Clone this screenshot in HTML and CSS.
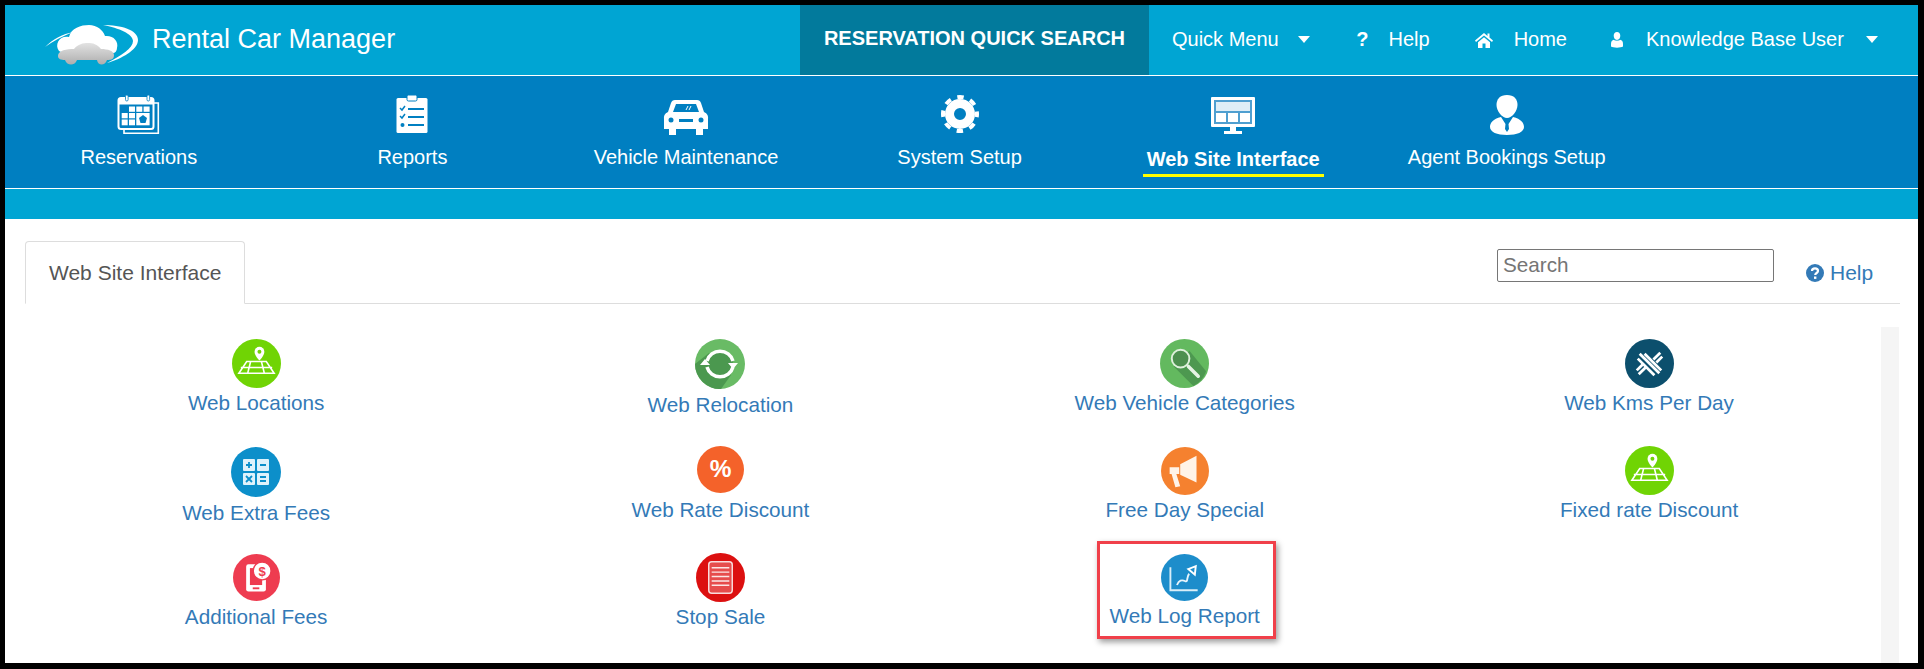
FILE: index.html
```html
<!DOCTYPE html>
<html lang="en">

<head>
	<meta charset="UTF-8">
	<title>Web Site Interface</title>
	<link rel="stylesheet" href="styles.css">
</head>

<body>
	<div class="frame">
		<header class="topbar">
			<div class="brand">
				<svg class="logo" viewBox="0 0 93 41">
					<defs>
						<linearGradient id="carFill" x1="0" y1="0" x2="0" y2="1">
							<stop offset="0" stop-color="#e2e2e2" />
							<stop offset="1" stop-color="#aeaeae" />
						</linearGradient>
					</defs>
					<path d="M0 23C8 15 18 10 28 8C18 12 8 17 0 23Z" fill="#fff" />
					<path d="M58 1C76 1 93 6 93 16C93 26 76 35 62 39C76 32 88 24 88 17C88 10 74 4 58 1Z" fill="#fff" />
					<path d="M14 27C9 20 15 11 24 13C26 4 36 1 44 1C52 1 58 6 60 12C68 11 74 17 72 24C72 27 70 29 68 29H18Z" fill="#fff" />
					<path d="M13 32C13 26 22 25 29 25C33 20 38 19 43 19C48 19 52 20 56 25C63 25 69 27 69 31C69 35 67 36 62 36C60 42 53 42 52 36H32C30 42 22 42 20 36C16 36 13 35 13 32Z" fill="url(#carFill)" />
				</svg>
				<span class="brand-name">Rental Car Manager</span>
			</div>
			<a class="quick-search" href="#">RESERVATION QUICK SEARCH</a>
			<nav class="top-links">
				<a class="top-link link-menu" href="#">Quick Menu <span class="caret"></span></a>
				<a class="top-link link-help" href="#"><b class="help-mark">?</b>Help</a>
				<a class="top-link link-home" href="#">
					<svg class="top-icon" viewBox="0 0 18 16">
						<path d="M9 1L0 8.6L1 10L9 3.4L17 10L18 8.6L14.5 5.6V1.5H12.5V3.9ZM3 10.2V16H7.5V11.5H10.5V16H15V10.2L9 5.2Z" fill="#fff" />
					</svg>Home</a>
				<a class="top-link link-user" href="#">
					<svg class="top-icon user-icon" viewBox="0 0 12 16">
						<path d="M6 0C8 0 9.300 1.700 9.300 3.800C9.300 6 8 8 6 8C4 8 2.700 6 2.700 3.800C2.700 1.700 4 0 6 0ZM3 7.800C4 9 8 9 9 7.800C11 8.300 12 9.500 12 12V14.500C10 16 2 16 0 14.500V12C0 9.500 1 8.300 3 7.800Z" fill="#fff" />
					</svg>Knowledge Base User <span class="caret caret-user"></span></a>
			</nav>
		</header>

		<nav class="mainnav">
			<a class="nav-item" href="#">
				<svg class="nav-icon" viewBox="0 0 46 40">
					<path d="M38 8H42.300V38.300H8V34" fill="none" stroke="#fff" stroke-width="1.600" />
					<rect x="2.500" y="3" width="35" height="31" rx="2.500" fill="#007fc1" stroke="#fff" stroke-width="2" />
					<path d="M3 3H37V9.500H3Z" fill="#fff" />
					<rect x="9.500" y="0" width="2.600" height="6" rx="1.300" fill="#fff" stroke="#007fc1" stroke-width="0.800" />
					<rect x="31" y="0" width="2.600" height="6" rx="1.300" fill="#fff" stroke="#007fc1" stroke-width="0.800" />
					<g fill="#fff">
						<rect x="13" y="11.500" width="6" height="5.300" />
						<rect x="20.300" y="11.500" width="6" height="5.300" />
						<rect x="27.600" y="11.500" width="6" height="5.300" />
						<rect x="5.700" y="18" width="6" height="5.300" />
						<rect x="13" y="18" width="6" height="5.300" />
						<rect x="5.700" y="24.500" width="6" height="5.800" />
						<rect x="13" y="24.500" width="6" height="5.800" />
						<rect x="20.300" y="18" width="13.300" height="12.300" />
					</g>
					<path d="M27 20L31 23L29.500 28H24.500L23 23Z" fill="#007fc1" />
				</svg>
				<span class="nav-label">Reservations</span>
			</a>
			<a class="nav-item" href="#">
				<svg class="nav-icon" viewBox="0 0 46 40">
					<rect x="7.500" y="3" width="31" height="35" rx="1.500" fill="#fff" />
					<rect x="18" y="0" width="10" height="6" rx="1.500" fill="#fff" stroke="#007fc1" />
					<path d="M11 13L13 15L16 11M11 21L13 23L16 19" fill="none" stroke="#007fc1" stroke-width="1.500" />
					<circle cx="13.500" cy="30" r="2" fill="#007fc1" />
					<path d="M19 14H35M19 22H35M19 30H35" stroke="#007fc1" stroke-width="2.200" />
				</svg>
				<span class="nav-label">Reports</span>
			</a>
			<a class="nav-item" href="#">
				<svg class="nav-icon" viewBox="0 0 46 40">
					<path d="M12 5H34Q37 5 38 8L41 17Q46 19 45 25V34H40V40H33V34H13V40H6V34H1V25Q0 19 5 17L8 8Q9 5 12 5Z" fill="#fff" />
					<path d="M13 9H33L36 17H10Z" fill="#007fc1" />
					<path d="M23 15L25 11M26 15L28 11" stroke="#fff" stroke-width="1" />
					<circle cx="8" cy="25" r="2.500" fill="#007fc1" />
					<circle cx="38" cy="25" r="2.500" fill="#007fc1" />
					<rect x="16" y="24" width="14" height="3" fill="#007fc1" />
				</svg>
				<span class="nav-label">Vehicle Maintenance</span>
			</a>
			<a class="nav-item" href="#">
				<svg class="nav-icon" viewBox="0 0 46 40">
					<circle cx="23" cy="19" r="17" fill="none" stroke="#fff" stroke-width="4" stroke-dasharray="6.500 6.850" stroke-dashoffset="3.250" />
					<circle cx="23" cy="19" r="10.500" fill="none" stroke="#fff" stroke-width="9" />
				</svg>
				<span class="nav-label">System Setup</span>
			</a>
			<a class="nav-item" href="#">
				<svg class="nav-icon" viewBox="0 0 46 40">
					<rect x="1" y="2" width="44" height="30" rx="1" fill="#fff" />
					<rect x="4" y="5" width="38" height="24" fill="#4f9fd0" />
					<rect x="6" y="7" width="34" height="9" fill="#dfeef7" />
					<path d="M6 18H16V27H6ZM18 18H28V27H18ZM30 18H40V27H30Z" fill="#fff" />
					<path d="M20 32H26V36H32V39H14V36H20Z" fill="#fff" />
				</svg>
				<span class="nav-label nav-label-active">Web Site Interface</span>
			</a>
			<a class="nav-item" href="#">
				<svg class="nav-icon" viewBox="0 0 46 40">
					<path d="M23 0C30 0 33.500 4 33.500 10C33.500 16 28 23 23 23C18 23 12.500 16 12.500 10C12.500 4 16 0 23 0Z" fill="#fff" />
					<path d="M17 22C9 24 6 28 6 32C6 37 13 40 23 40C33 40 40 37 40 32C40 28 37 24 29 22L24.500 29L25 34L23 37L21 34L21.500 29Z" fill="#fff" />
				</svg>
				<span class="nav-label">Agent Bookings Setup</span>
			</a>
		</nav>

		<div class="strip"></div>

		<main class="page">
			<div class="tabbar">
				<div class="tab">Web Site Interface</div>
				<input class="search" type="text" placeholder="Search">
				<a class="help" href="#">
					<svg class="help-icon" viewBox="0 0 18 18">
						<circle cx="9" cy="9" r="9" fill="#337ab7" />
						<path d="M6 7C6 3.500 12 3.500 12 7C12 9 9.200 9 9.200 11" fill="none" stroke="#fff" stroke-width="2.200" />
						<rect x="8" y="12.500" width="2.400" height="2.400" fill="#fff" />
					</svg>Help</a>
			</div>

			<div class="panel">
				<div class="tiles">
					<a class="tile" href="#">
						<span class="tile-icon"><svg class="ico ico-49" viewBox="0 0 50 50">
								<circle cx="25" cy="25" r="25" fill="#70d404" />
								<path d="M15 23H35L43 35H7ZM9 29H41M19 23L16 35M30 23L33 35" fill="none" stroke="#fff" stroke-width="1.600" />
								<path d="M28 8A5 5 0 0 1 33 13C33 17 28 22 28 22C28 22 23 17 23 13A5 5 0 0 1 28 8Z" fill="#fff" />
								<circle cx="28" cy="13" r="2" fill="#70d404" />
							</svg></span>
						<span class="tile-label">Web Locations</span>
					</a>
					<a class="tile" href="#">
						<span class="tile-icon tile-icon-56"><svg class="ico ico-50" viewBox="0 0 50 50">
								<circle cx="25" cy="25" r="25" fill="#69bb65" />
								<path d="M14 14L36 36L26 50A25 25 0 0 1 0 25Z" fill="#4b984f" />
								<circle cx="25" cy="25" r="13" fill="#4b984f" />
								<path d="M12 22A13.500 13.500 0 0 1 38 22M38 28A13.500 13.500 0 0 1 12 28" fill="none" stroke="#fff" stroke-width="3.500" />
								<path d="M33 24H43L38 30ZM5 26H15L10 20Z" fill="#fff" />
							</svg></span>
						<span class="tile-label">Web Relocation</span>
					</a>
					<a class="tile" href="#">
						<span class="tile-icon"><svg class="ico ico-49" viewBox="0 0 50 50">
								<circle cx="25" cy="25" r="25" fill="#63b95f" />
								<path d="M14 28L30 12L47 33A25 25 0 0 1 34 48Z" fill="#4d9850" />
								<circle cx="21" cy="20" r="9" fill="#4d8f4f" stroke="#dff0dc" stroke-width="2" />
								<path d="M29 28L39 38" stroke="#e6f3e4" stroke-width="3.600" stroke-linecap="round" />
							</svg></span>
						<span class="tile-label">Web Vehicle Categories</span>
					</a>
					<a class="tile" href="#">
						<span class="tile-icon"><svg class="ico ico-49" viewBox="0 0 50 50">
								<circle cx="25" cy="25" r="25" fill="#0c4f6d" />
								<g stroke="#fff" stroke-width="2.800">
									<path d="M15 15L35 35M20 15L37 32M13 20L30 37" />
									<path d="M29 21L36 14M32 24L38 18M21 29L14 36M18 26L12 32" />
								</g>
							</svg></span>
						<span class="tile-label">Web Kms Per Day</span>
					</a>

					<a class="tile" href="#">
						<span class="tile-icon tile-icon-57"><svg class="ico ico-50 ico-down" viewBox="0 0 50 50">
								<circle cx="25" cy="25" r="25" fill="#0c8fca" />
								<rect x="12" y="12" width="12" height="12" rx="1" fill="#dff2fb" />
								<rect x="26" y="12" width="12" height="12" rx="1" fill="#dff2fb" />
								<rect x="12" y="26" width="12" height="12" rx="1" fill="#dff2fb" />
								<rect x="26" y="26" width="12" height="12" rx="1" fill="#dff2fb" />
								<path d="M15 18H21M18 15V21M29 18H35M15 29L21 35M21 29L15 35M29 30H35M29 34H35" stroke="#0c8fca" stroke-width="1.800" />
							</svg></span>
						<span class="tile-label">Web Extra Fees</span>
					</a>
					<a class="tile" href="#">
						<span class="tile-icon"><svg class="ico ico-47" viewBox="0 0 50 50">
								<circle cx="25" cy="25" r="25" fill="#f4622a" />
								<text class="percent" x="25" y="33" text-anchor="middle">%</text>
							</svg></span>
						<span class="tile-label">Web Rate Discount</span>
					</a>
					<a class="tile" href="#">
						<span class="tile-icon"><svg class="ico ico-48 ico-down" viewBox="0 0 50 50">
								<circle cx="25" cy="25" r="25" fill="#f5812f" />
								<path d="M20 18L37 9V37L20 29Z" fill="#fff3e8" />
								<path d="M9 21H19V28H16L20 41L15 42L11 28H9Z" fill="#fff3e8" />
							</svg></span>
						<span class="tile-label">Free Day Special</span>
					</a>
					<a class="tile" href="#">
						<span class="tile-icon"><svg class="ico ico-49" viewBox="0 0 50 50">
								<circle cx="25" cy="25" r="25" fill="#70d404" />
								<path d="M15 23H35L43 35H7ZM9 29H41M19 23L16 35M30 23L33 35" fill="none" stroke="#fff" stroke-width="1.600" />
								<path d="M28 8A5 5 0 0 1 33 13C33 17 28 22 28 22C28 22 23 17 23 13A5 5 0 0 1 28 8Z" fill="#fff" />
								<circle cx="28" cy="13" r="2" fill="#70d404" />
							</svg></span>
						<span class="tile-label">Fixed rate Discount</span>
					</a>

					<a class="tile" href="#">
						<span class="tile-icon"><svg class="ico ico-47 ico-down" viewBox="0 0 50 50">
								<circle cx="25" cy="25" r="25" fill="#ee3c50" />
								<rect x="14" y="11" width="21" height="29" rx="2.500" fill="#fff" />
								<rect x="18" y="15" width="13" height="18" fill="#ee3c50" />
								<rect x="21" y="35.500" width="7" height="2" fill="#ee3c50" />
								<circle cx="31" cy="18" r="9.500" fill="#fff" stroke="#ee3c50" stroke-width="1.500" />
								<text class="dollar" x="31" y="23" text-anchor="middle">$</text>
							</svg></span>
						<span class="tile-label">Additional Fees</span>
					</a>
					<a class="tile" href="#">
						<span class="tile-icon"><svg class="ico ico-49" viewBox="0 0 50 50">
								<circle cx="25" cy="25" r="25" fill="#dc1010" />
								<rect x="13" y="9" width="24" height="32" rx="3" fill="#e64c4c" stroke="#f9dcdc" stroke-width="1.500" />
								<path d="M16 15H34M16 19.500H34M16 24H34M16 28.500H34M16 33H34" stroke="#fbe6e6" stroke-width="1.500" />
							</svg></span>
						<span class="tile-label">Stop Sale</span>
					</a>
					<a class="tile tile-marked" href="#">
						<span class="tile-icon tile-icon-53"><svg class="ico ico-47 ico-down" viewBox="0 0 50 50">
								<circle cx="25" cy="25" r="25" fill="#1d8dcb" />
								<path d="M10 14V38.500H39" fill="none" stroke="#d9eef8" stroke-width="2" />
								<path d="M17 33C19 28 22 27 26 29C29 30 27 24 30 21" fill="none" stroke="#e8f4fb" stroke-width="2" />
								<path d="M29 16L37 13L36 22Z" fill="none" stroke="#fff" stroke-width="2" />
							</svg></span>
						<span class="tile-label">Web Log Report</span>
					</a>
				</div>
				<div class="track"></div>
			</div>
		</main>
	</div>
</body>

</html>
```

FILE: styles.css
```css
* {
	box-sizing: border-box;
}

html,
body {
	height: 100%;
}

body {
	margin: 0;
	background-color: #000;
	font-family: 'Liberation Sans', Arial, sans-serif;
	overflow: hidden;
}

a {
	text-decoration: none;
}

.frame {
	width: 1913px;
	height: 658px;
	margin: 5px 0 0 5px;
	background-color: #fff;
	overflow: hidden;
}

/* top bar */
.topbar {
	display: flex;
	height: 71px;
	background-color: #00a5d3;
	border-bottom: 1px solid #fff;
	color: #fff;
}

.brand {
	display: flex;
	align-items: center;
	width: 795px;
	padding-left: 40px;
}

.logo {
	width: 93px;
	height: 41px;
	margin-top: 9px;
}

.brand-name {
	margin-left: 14px;
	margin-top: -2px;
	font-size: 27px;
}

.quick-search {
	display: flex;
	align-items: center;
	justify-content: center;
	width: 349px;
	padding-bottom: 4px;
	background-color: #027a9c;
	color: #fff;
	font-size: 20px;
	font-weight: 700;
}

.top-links {
	display: flex;
	align-items: center;
	padding: 0 0 1px 23px;
}

.top-link {
	display: flex;
	align-items: center;
	color: #fff;
	font-size: 20px;
	white-space: pre;
}

.caret {
	width: 0;
	height: 0;
	margin-left: 14px;
	border-left: 6px solid transparent;
	border-right: 6px solid transparent;
	border-top: 7px solid #fff;
}

.caret-user {
	margin-left: 17px;
}

.link-help {
	margin-left: 46px;
}

.help-mark {
	margin-right: 20px;
}

.link-home {
	margin-left: 45px;
}

.link-user {
	margin-left: 44px;
}

.top-icon {
	width: 18px;
	height: 16px;
	margin-right: 21px;
}

.user-icon {
	width: 12px;
	margin-right: 23px;
}

/* main nav */
.mainnav {
	display: grid;
	grid-template-columns: repeat(6, 273.6px);
	height: 113px;
	margin-left: -3px;
	padding-top: 19px;
	background-color: #007fc1;
	border-bottom: 1px solid #fff;
}

.nav-item {
	display: flex;
	flex-direction: column;
	align-items: center;
	color: #fff;
}

.nav-icon {
	width: 46px;
	height: 40px;
}

.nav-label {
	margin-top: 12px;
	font-size: 20px;
	line-height: 20px;
}

.nav-label-active {
	margin-top: 14px;
	padding: 0 4px 5px;
	border-bottom: 3px solid #ffff00;
	font-weight: 700;
}

.strip {
	height: 30px;
	background-color: #00a5d3;
}

/* tab row */
.page {
	padding: 22px 18px 0 20px;
}

.tabbar {
	display: flex;
	height: 63px;
	border-bottom: 1px solid #ddd;
}

.tab {
	width: 220px;
	height: 63px;
	padding-left: 23px;
	border: 1px solid #ddd;
	border-bottom-color: #fff;
	border-radius: 4px 4px 0 0;
	color: #555;
	font-size: 21px;
	line-height: 62px;
}

.search {
	width: 277px;
	height: 33px;
	margin: 8px 0 0 1252px;
	padding: 0 5px 2px;
	border: 1px solid #767676;
	border-radius: 2px;
	font-family: inherit;
	font-size: 20.7px;
}

.help {
	display: flex;
	align-items: center;
	height: 20px;
	margin: 22px 0 0 32px;
	color: #337ab7;
	font-size: 21px;
}

.help-icon {
	width: 18px;
	height: 18px;
	margin-right: 6px;
}

/* tile grid */
.panel {
	display: flex;
	margin-top: 23px;
	height: 340px;
}

.tiles {
	display: grid;
	grid-template-columns: repeat(4, 464.3px);
	grid-auto-rows: 107px;
	width: 1857px;
	margin-left: -1px;
	padding-top: 12px;
}

.track {
	width: 18px;
	background-color: #f5f5f5;
}

.tile {
	position: relative;
	display: flex;
	flex-direction: column;
	align-items: center;
	color: #337ab7;
}

.tile-icon {
	display: block;
	height: 54px;
}

.tile-icon-53 {
	height: 53px;
}

.tile-icon-56 {
	height: 56px;
}

.tile-icon-57 {
	height: 57px;
}

.ico {
	display: block;
}

.ico-down {
	margin-top: 1px;
}

.ico-47 {
	width: 47px;
	height: 47px;
}

.ico-48 {
	width: 48px;
	height: 48px;
}

.ico-49 {
	width: 49px;
	height: 49px;
}

.ico-50 {
	width: 50px;
	height: 50px;
}

.tile-label {
	font-size: 20.7px;
	line-height: 20px;
}

.percent {
	fill: #fff;
	font-size: 26px;
	font-weight: 700;
}

.dollar {
	fill: #ee3c50;
	font-size: 14px;
	font-weight: 700;
}

/* red box that calls out one tile */
.tile-marked::after {
	content: "";
	box-sizing: border-box;
	position: absolute;
	left: 144.5px;
	top: -12px;
	width: 179px;
	height: 98px;
	border: 3px solid #f0404a;
	box-shadow: 2px 3px 6px rgba(0, 0, 0, 0.4);
}
```
